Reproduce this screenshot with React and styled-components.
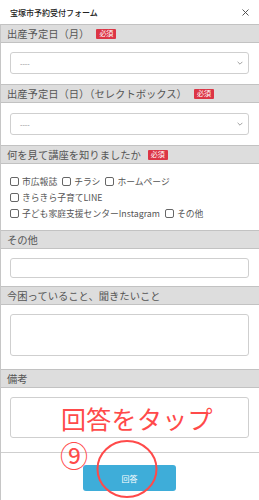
import React from "react";
import styled, { createGlobalStyle } from "styled-components";

const Global = createGlobalStyle`
  html, body { margin: 0; padding: 0; background: #fff; }
  body { font-family: "Noto Sans CJK JP", "Noto Sans", sans-serif; }
  * { box-sizing: border-box; }
`;

const Page = styled.div`
  position: relative;
  width: 259px;
  height: 500px;
  overflow: hidden;
  background: #fff;
`;

const TitleBar = styled.div`
  height: 24px;
  display: flex;
  align-items: center;
  justify-content: space-between;
  padding: 0 10px 0 10px;
  font-size: 8px;
  font-weight: 500;
  color: #222;
`;

const Body = styled.div`
  border-left: 1px solid #c6c6c6;
  height: 476px;
`;

const SectionHeader = styled.div`
  height: 19px;
  display: flex;
  align-items: center;
  gap: 7px;
  padding-left: 6px;
  background: #dddddd;
  border-top: 1px solid #c2c2c2;
  border-bottom: 1px solid #c2c2c2;
  font-size: 10.3px;
  color: #555;
  white-space: nowrap;
`;

const Badge = styled.span`
  display: inline-flex;
  align-items: center;
  justify-content: center;
  height: 10px;
  padding: 0 3px;
  background: #dc3545;
  color: #fff;
  font-size: 7px;
  border-radius: 1px;
  line-height: 1;
`;

const Content = styled.div`
  padding: ${(p) => p.$pt}px 10px ${(p) => p.$pb}px 9px;
`;

const SelectBox = styled.div`
  height: 22px;
  border: 1px solid #cfcfcf;
  border-radius: 3px;
  display: flex;
  align-items: center;
  justify-content: space-between;
  padding: 0 5px 0 9px;
  font-size: 7px;
  color: #888;
`;

const TextInput = styled.div`
  height: ${(p) => p.$h}px;
  border: 1px solid #cfcfcf;
  border-radius: 3px;
  background: #fff;
`;

const CheckGroup = styled.div`
  display: flex;
  flex-direction: column;
`;

const CheckRow = styled.div`
  display: flex;
  align-items: center;
  gap: 5px;
  height: 16px;
`;

const CheckItem = styled.label`
  display: inline-flex;
  align-items: center;
  gap: 3px;
  font-size: 8.8px;
  font-weight: 400;
  color: #555;
  white-space: nowrap;
`;

const Box = styled.span`
  width: 9px;
  height: 9px;
  border: 1px solid #666;
  border-radius: 2px;
  background: #fff;
  flex: none;
`;

const Footer = styled.div`
  margin-top: 14px;
  border-top: 1px solid #cfcfcf;
  display: flex;
  justify-content: center;
  padding-top: 12px;
  padding-right: 1px;
`;

const SubmitButton = styled.button`
  width: 93px;
  height: 26px;
  border: none;
  border-radius: 3px;
  background: #3eadd9;
  color: #fff;
  font-family: inherit;
  font-size: 8px;
`;

const Annotation = styled.div`
  position: absolute;
  left: 61px;
  top: 402px;
  font-size: 25px;
  line-height: 1.3;
  color: #ff4a4a;
  letter-spacing: 0.3px;
  white-space: nowrap;
`;

const StepNumber = styled.div`
  position: absolute;
  left: 60px;
  top: 441px;
  font-family: "Noto Sans CJK JP", sans-serif;
  font-size: 28px;
  line-height: 1;
  color: #ff4a4a;
`;

const Ring = styled.svg`
  position: absolute;
  left: 95px;
  top: 439px;
  pointer-events: none;
`;

const Chevron = () => (
  <svg width="6" height="4" viewBox="0 0 6 4">
    <path d="M0.6 0.8 L3 3.2 L5.4 0.8" fill="none" stroke="#888" strokeWidth="0.8" />
  </svg>
);

const CloseIcon = () => (
  <svg width="7" height="7" viewBox="0 0 7 7">
    <path d="M0.5 0.5 L6.5 6.5 M6.5 0.5 L0.5 6.5" stroke="#444" strokeWidth="0.9" />
  </svg>
);

const Check = ({ children }) => (
  <CheckItem>
    <Box />
    {children}
  </CheckItem>
);

export default function App() {
  return (
    <>
      <Global />
      <Page>
        <TitleBar>
          <span>宝塚市予約受付フォーム</span>
          <CloseIcon />
        </TitleBar>
        <Body>
          <SectionHeader>
            出産予定日（月）<Badge>必須</Badge>
          </SectionHeader>
          <Content $pt={9} $pb={10}>
            <SelectBox>
              <span>----</span>
              <Chevron />
            </SelectBox>
          </Content>
          <SectionHeader>
            出産予定日（日）（セレクトボックス）<Badge>必須</Badge>
          </SectionHeader>
          <Content $pt={10} $pb={10}>
            <SelectBox>
              <span>----</span>
              <Chevron />
            </SelectBox>
          </Content>
          <SectionHeader>
            何を見て講座を知りましたか<Badge>必須</Badge>
          </SectionHeader>
          <Content $pt={9} $pb={9}>
            <CheckGroup>
              <CheckRow>
                <Check>市広報誌</Check>
                <Check>チラシ</Check>
                <Check>ホームページ</Check>
              </CheckRow>
              <CheckRow>
                <Check>きらきら子育てLINE</Check>
              </CheckRow>
              <CheckRow>
                <Check>子ども家庭支援センターInstagram</Check>
                <Check>その他</Check>
              </CheckRow>
            </CheckGroup>
          </Content>
          <SectionHeader>その他</SectionHeader>
          <Content $pt={9} $pb={8}>
            <TextInput $h={20} />
          </Content>
          <SectionHeader>今困っていること、聞きたいこと</SectionHeader>
          <Content $pt={9} $pb={13}>
            <TextInput $h={42} />
          </Content>
          <SectionHeader>備考</SectionHeader>
          <Content $pt={9} $pb={0}>
            <TextInput $h={41} />
          </Content>
          <Footer>
            <SubmitButton>回答</SubmitButton>
          </Footer>
        </Body>
        <Annotation>回答をタップ</Annotation>
        <StepNumber>⑨</StepNumber>
        <Ring width="64" height="62" viewBox="0 0 64 62">
          <ellipse cx="32" cy="30" rx="29.5" ry="28" fill="none" stroke="#ff4a4a" strokeWidth="2" />
        </Ring>
      </Page>
    </>
  );
}
